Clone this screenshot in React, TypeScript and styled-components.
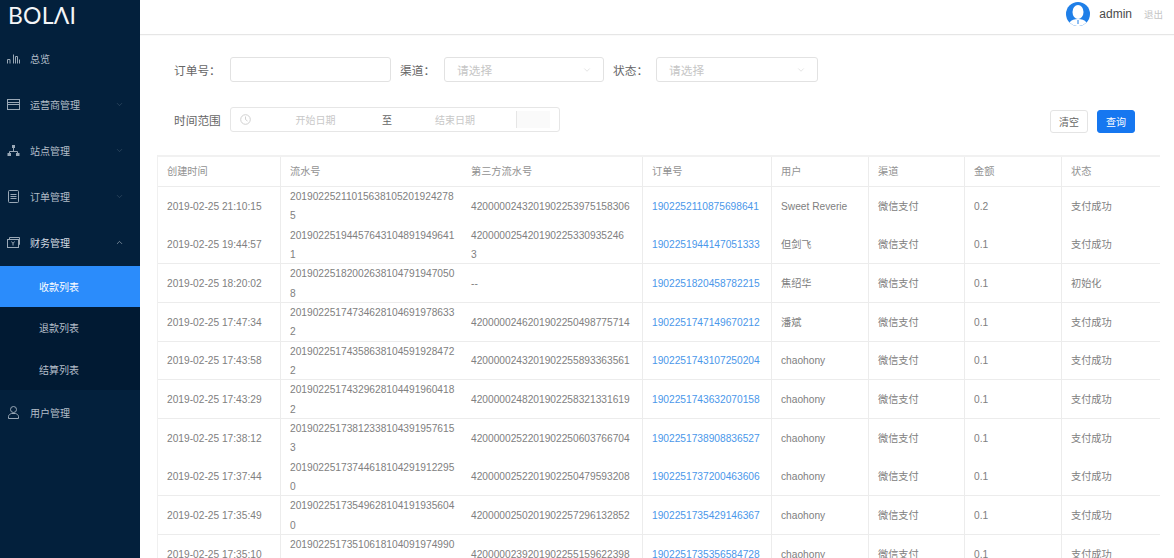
import React from "react";
import styled, { createGlobalStyle } from "styled-components";
import { ChevronDown, ChevronUp } from "lucide-react";

const Global = createGlobalStyle`
  html, body { margin: 0; padding: 0; height: 558px; overflow: hidden; background: #fff; }
  body { font-family: "Liberation Sans", "Noto Sans CJK SC", sans-serif; }
  * { box-sizing: border-box; }
`;

const Page = styled.div`
  display: flex;
  width: 1174px;
  height: 558px;
  overflow: hidden;
`;
const Sidebar = styled.aside`
  flex: 0 0 140px;
  background: #03203c;
  color: #b4bec9;
`;
const Logo = styled.div`
  height: 36px;
  padding: 1px 0 0 8px;
  color: #f4f6f8;
  font-size: 23px;
  line-height: 28px;
  letter-spacing: 0.2px;
  font-family: "Lato", sans-serif;
`;
const MenuItem = styled.div<{ $bright?: boolean; $flush?: boolean }>`
  display: flex;
  align-items: center;
  height: 46px;
  padding: 0 16px ${(p) => (p.$flush ? 0 : 2)}px 7px;
  font-size: 10px;
  color: ${(p) => (p.$bright ? "#d5dce3" : "#b4bec9")};
`;
const MenuIcon = styled.svg`
  width: 13px;
  height: 13px;
  margin-right: 10px;
  flex: none;
  fill: none;
  stroke: #9aa8b6;
  stroke-width: 1;
`;
const MenuLabel = styled.span`
  flex: 1;
`;
const Caret = styled.span<{ $open?: boolean }>`
  display: flex;
  color: ${(p) => (p.$open ? "#c9d2da" : "#4f6478")};
`;
const SubMenu = styled.div`
  background: #011a33;
`;
const SubItem = styled.div<{ $active?: boolean }>`
  height: 41.33px;
  display: flex;
  align-items: center;
  padding-left: 39px;
  font-size: 10px;
  background: ${(p) => (p.$active ? "#2b8cfb" : "transparent")};
  color: ${(p) => (p.$active ? "#ffffff" : "#b4bec9")};
`;

const Main = styled.main`
  flex: 1;
  min-width: 0;
`;
const Header = styled.header`
  height: 35px;
  border-bottom: 1px solid #e6e6e6;
  display: flex;
  justify-content: flex-end;
  padding: 2px 11px 0 0;
  box-shadow: 0 1px 1px rgba(0, 0, 0, 0.02);
`;
const Avatar = styled.svg`
  width: 24px;
  height: 24px;
  margin-right: 9px;
`;
const UserName = styled.span`
  font-size: 12px;
  line-height: 24px;
  color: #4a4a4a;
  margin-right: 12px;
`;
const Logout = styled.span`
  font-size: 9.5px;
  line-height: 26px;
  color: #c4c4c4;
`;

const FilterRow = styled.div<{ $top: number }>`
  display: flex;
  align-items: center;
  height: 25px;
  margin-top: ${(p) => p.$top}px;
  padding-left: 34px;
`;
const FilterLabel = styled.label<{ $w: number; $ml?: number }>`
  flex: none;
  width: ${(p) => p.$w}px;
  margin-left: ${(p) => p.$ml ?? 0}px;
  font-size: 11.7px;
  color: #666;
`;
const Field = styled.div<{ $w: number }>`
  flex: none;
  width: ${(p) => p.$w}px;
  height: 25px;
  border: 1px solid #e2e2e2;
  border-radius: 3px;
  display: flex;
  align-items: center;
  padding: 0 11px 0 12px;
  font-size: 11.7px;
  color: #c6c6c6;
`;
const Placeholder = styled.span`
  flex: 1;
`;
const FieldChevron = styled.span`
  display: flex;
  color: #c8c8c8;
`;
const RangeField = styled.div`
  flex: none;
  width: 330px;
  height: 25px;
  border: 1px solid #e6e6e6;
  border-radius: 3px;
  display: flex;
  align-items: center;
  padding-left: 9px;
  font-size: 10px;
  color: #c8c8c8;
`;
const ClockIcon = styled.svg`
  width: 11px;
  height: 11px;
  flex: none;
  fill: none;
  stroke: #d0d0d0;
  stroke-width: 1;
`;
const RangeDate = styled.span<{ $w: number }>`
  flex: none;
  width: ${(p) => p.$w}px;
  text-align: center;
`;
const RangeSep = styled.span`
  flex: none;
  width: 14px;
  text-align: center;
  color: #666;
  font-size: 10px;
`;
const RangeTail = styled.span`
  flex: none;
  width: 34px;
  height: 17px;
  background: #fafafa;
  border-left: 1px solid #e6e6e6;
`;
const Actions = styled.div`
  margin-left: auto;
  display: flex;
  gap: 9px;
  padding-right: 39px;
`;
const Button = styled.button<{ $primary?: boolean }>`
  width: 38px;
  height: 23px;
  margin-top: 3px;
  padding: 0;
  border-radius: 3px;
  border: 1px solid ${(p) => (p.$primary ? "#1677f0" : "#e4e4e4")};
  background: ${(p) => (p.$primary ? "#1677f0" : "#fff")};
  color: ${(p) => (p.$primary ? "#fff" : "#666")};
  font-family: inherit;
  font-size: 10px;
`;

const Table = styled.div`
  margin: 23px 14px 0 17px;
  border-top: 2px solid #f1f1f1;
  border-left: 1px solid #f0f0f0;
`;
const COLS = "123px 181px 181px 129px 97px 96px 97px 98px";
const HeadRow = styled.div`
  display: grid;
  grid-template-columns: ${COLS};
  height: 30px;
  border-bottom: 1px solid #ececec;
`;
const Row = styled.div<{ $noLine?: boolean }>`
  display: grid;
  grid-template-columns: ${COLS};
  height: 38.67px;
  border-bottom: 1px solid ${(p) => (p.$noLine ? "transparent" : "#ececec")};
`;
const Cell = styled.div<{ $plain?: boolean }>`
  display: flex;
  align-items: center;
  padding: 0 0 0 9px;
  font-size: 10.2px;
  line-height: 19.3px;
  color: #808080;
  white-space: pre-line;
  border-right: 1px solid ${(p) => (p.$plain ? "transparent" : "#ececec")};
`;
const HeadCell = styled(Cell)`
  color: #929292;
`;
const OrderLink = styled.a`
  color: #4a97ea;
`;

type Order = [string, string, string, string, string, string, string];
const orders: Order[] = [
  ["2019-02-25 21:10:15", "20190225211015638105201924278\n5", "4200000243201902253975158306", "1902252110875698641", "Sweet Reverie", "0.2", "支付成功"],
  ["2019-02-25 19:44:57", "20190225194457643104891949641\n1", "420000025420190225330935246\n3", "1902251944147051333", "但剑飞", "0.1", "支付成功"],
  ["2019-02-25 18:20:02", "20190225182002638104791947050\n8", "--", "1902251820458782215", "焦绍华", "0.1", "初始化"],
  ["2019-02-25 17:47:34", "20190225174734628104691978633\n2", "4200000246201902250498775714", "1902251747149670212", "潘斌", "0.1", "支付成功"],
  ["2019-02-25 17:43:58", "20190225174358638104591928472\n2", "4200000243201902255893363561", "1902251743107250204", "chaohony", "0.1", "支付成功"],
  ["2019-02-25 17:43:29", "20190225174329628104491960418\n2", "4200000248201902258321331619", "1902251743632070158", "chaohony", "0.1", "支付成功"],
  ["2019-02-25 17:38:12", "20190225173812338104391957615\n3", "4200000252201902250603766704", "1902251738908836527", "chaohony", "0.1", "支付成功"],
  ["2019-02-25 17:37:44", "20190225173744618104291912295\n0", "4200000252201902250479593208", "1902251737200463606", "chaohony", "0.1", "支付成功"],
  ["2019-02-25 17:35:49", "20190225173549628104191935604\n0", "4200000250201902257296132852", "1902251735429146367", "chaohony", "0.1", "支付成功"],
  ["2019-02-25 17:35:10", "20190225173510618104091974990\n0", "4200000239201902255159622398", "1902251735356584728", "chaohony", "0.1", "支付成功"],
];
const heads = ["创建时间", "流水号", "第三方流水号", "订单号", "用户", "渠道", "金额", "状态"];

const chevron = <ChevronDown size={9} strokeWidth={1.2} />;

export default function App() {
  return (
    <Page>
      <Global />
      <Sidebar>
        <Logo>BOLΛI</Logo>
        <MenuItem>
          <MenuIcon viewBox="0 0 13 13">
            <path d="M0.5 11.500V7.500h2.500v4M6.500 11.500V2.500M8.500 11.500V4.500h2v7M12.500 11.500V7.500" />
          </MenuIcon>
          <MenuLabel>总览</MenuLabel>
        </MenuItem>
        <MenuItem>
          <MenuIcon viewBox="0 0 13 13">
            <rect x="0.5" y="1.5" width="12" height="10" />
            <path d="M0.5 4.500h12M0.5 6.500h12" />
          </MenuIcon>
          <MenuLabel>运营商管理</MenuLabel>
          <Caret>{chevron}</Caret>
        </MenuItem>
        <MenuItem>
          <MenuIcon viewBox="0 0 13 13">
            <rect x="5.5" y="1.5" width="2" height="2" fill="#9aa8b6" />
            <rect x="1" y="9.500" width="2.500" height="2" fill="#9aa8b6" />
            <rect x="9.500" y="9.500" width="2.500" height="2" fill="#9aa8b6" />
            <path d="M6.500 4v3.500M2.500 9V7.500h8V9" />
          </MenuIcon>
          <MenuLabel>站点管理</MenuLabel>
          <Caret>{chevron}</Caret>
        </MenuItem>
        <MenuItem>
          <MenuIcon viewBox="0 0 13 13">
            <rect x="1.5" y="0.5" width="10" height="12" rx="1" />
            <path d="M3.500 4.500h6M3.500 6.500h6M3.500 8.500h6" />
          </MenuIcon>
          <MenuLabel>订单管理</MenuLabel>
          <Caret>{chevron}</Caret>
        </MenuItem>
        <MenuItem $bright>
          <MenuIcon viewBox="0 0 13 13">
            <rect x="0.5" y="3.500" width="11" height="8" />
            <path d="M2.500 3.500V1.500h10v7h-1" />
            <path d="M4.500 5.500l1.500 2 1.500-2M6 7.500v2" />
          </MenuIcon>
          <MenuLabel>财务管理</MenuLabel>
          <Caret $open>
            <ChevronUp size={9} strokeWidth={1.4} />
          </Caret>
        </MenuItem>
        <SubMenu>
          <SubItem $active>收款列表</SubItem>
          <SubItem>退款列表</SubItem>
          <SubItem>结算列表</SubItem>
        </SubMenu>
        <MenuItem $flush>
          <MenuIcon viewBox="0 0 13 13">
            <circle cx="6.500" cy="3.500" r="3" />
            <path d="M1.500 12.500v-2c0-1.500 1.500-2.500 3-3h4c1.500.5 3 1.500 3 3v2z" />
          </MenuIcon>
          <MenuLabel>用户管理</MenuLabel>
        </MenuItem>
      </Sidebar>
      <Main>
        <Header>
          <Avatar viewBox="0 0 24 24">
            <circle cx="12" cy="12" r="12" fill="#1f7fe8" />
            <ellipse cx="12" cy="10" rx="5.500" ry="7" fill="#fff" />
            <path d="M3.500 20.500c2-3 5-3.500 8.500-3.500s6.500.5 8.500 3.500a12 12 0 0 1-17 0z" fill="#fff" />
            <path d="M12 18v4" stroke="#1f7fe8" strokeWidth="1" />
          </Avatar>
          <UserName>admin</UserName>
          <Logout>退出</Logout>
        </Header>
        <FilterRow $top={22}>
          <FilterLabel $w={56}>订单号：</FilterLabel>
          <Field $w={161} />
          <FilterLabel $w={44} $ml={9}>渠道：</FilterLabel>
          <Field $w={160}>
            <Placeholder>请选择</Placeholder>
            <FieldChevron><ChevronDown size={10} strokeWidth={1.2} /></FieldChevron>
          </Field>
          <FilterLabel $w={43} $ml={9}>状态：</FilterLabel>
          <Field $w={162}>
            <Placeholder>请选择</Placeholder>
            <FieldChevron><ChevronDown size={10} strokeWidth={1.2} /></FieldChevron>
          </Field>
        </FilterRow>
        <FilterRow $top={25}>
          <FilterLabel $w={56}>时间范围</FilterLabel>
          <RangeField>
            <ClockIcon viewBox="0 0 11 11">
              <circle cx="5.500" cy="5.500" r="4.800" />
              <path d="M5.500 2.500v3l2 1.500" />
            </ClockIcon>
            <RangeDate $w={129}>开始日期</RangeDate>
            <RangeSep>至</RangeSep>
            <RangeDate $w={122}>结束日期</RangeDate>
            <RangeTail />
          </RangeField>
          <Actions>
            <Button>清空</Button>
            <Button $primary>查询</Button>
          </Actions>
        </FilterRow>
        <Table>
          <HeadRow>
            {heads.map((h, i) => (
              <HeadCell key={h} $plain={i === 1 || i === 7}>{h}</HeadCell>
            ))}
          </HeadRow>
          {orders.map((o, i) => (
            <Row key={o[3]} $noLine={i === 0 || i === 6}>
              <Cell>{o[0]}</Cell>
              <Cell $plain>{o[1]}</Cell>
              <Cell>{o[2]}</Cell>
              <Cell><OrderLink>{o[3]}</OrderLink></Cell>
              <Cell>{o[4]}</Cell>
              <Cell>微信支付</Cell>
              <Cell>{o[5]}</Cell>
              <Cell $plain>{o[6]}</Cell>
            </Row>
          ))}
        </Table>
      </Main>
    </Page>
  );
}
